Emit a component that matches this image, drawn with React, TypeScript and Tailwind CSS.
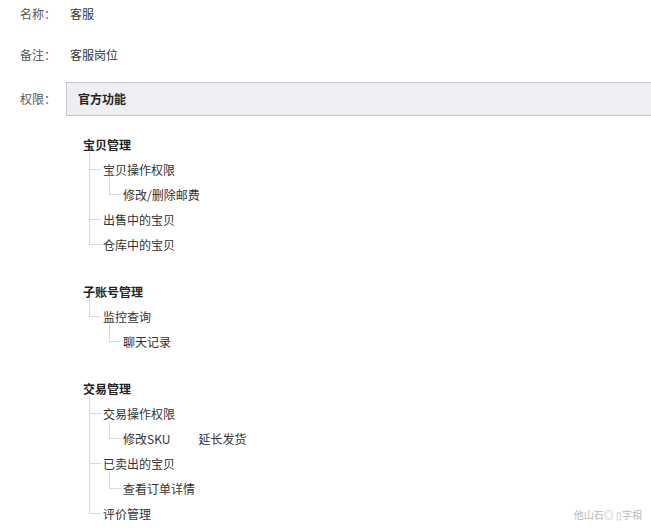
// Sub-account role detail — name / remark / permission tree.
import type { ReactNode } from 'react';

interface PermNode {
  label: string;
  extra?: string[]; // siblings shown on the same row
  children?: PermNode[];
}

const groups: PermNode[] = [
  {
    label: '宝贝管理',
    children: [
      { label: '宝贝操作权限', children: [{ label: '修改/删除邮费' }] },
      { label: '出售中的宝贝' },
      { label: '仓库中的宝贝' },
    ],
  },
  {
    label: '子账号管理',
    children: [{ label: '监控查询', children: [{ label: '聊天记录' }] }],
  },
  {
    label: '交易管理',
    children: [
      { label: '交易操作权限', children: [{ label: '修改SKU', extra: ['延长发货'] }] },
      { label: '已卖出的宝贝', children: [{ label: '查看订单详情' }] },
      { label: '评价管理' },
    ],
  },
];

// One branch: └ connector on the left, label + subtree on the right.
// The vertical stroke keeps running down for every child but the last.
function Branch({ node, last }: { node: PermNode; last: boolean }) {
  return (
    <div className="flex">
      <div className="flex w-[12px] shrink-0 flex-col">
        <div className="-mt-[5px] h-[18px] border-b border-l border-[#d9d9de]" />
        <div className={`flex-1 ${last ? '' : 'border-l border-[#d9d9de]'}`} />
      </div>
      <div className="min-w-0 pl-[2px]">
        <div className="flex h-[25px] items-center gap-[28px] text-[#333]">
          <span>{node.label}</span>
          {node.extra?.map((e) => <span key={e}>{e}</span>)}
        </div>
        {node.children && <Children nodes={node.children} />}
      </div>
    </div>
  );
}

function Children({ nodes }: { nodes: PermNode[] }) {
  return (
    <div className="ml-[6px]">
      {nodes.map((n, i) => (
        <Branch key={n.label} node={n} last={i === nodes.length - 1} />
      ))}
    </div>
  );
}

function Row({ label, children, className = '' }: { label: string; children: ReactNode; className?: string }) {
  return (
    <div className={`flex items-center ${className}`}>
      <div className="w-[46px] shrink-0 text-[#555]">{label}</div>
      {children}
    </div>
  );
}

export default function App() {
  return (
    <div
      className="relative h-[528px] w-[651px] overflow-hidden bg-white pl-[20px] pt-[4px] text-[12px] leading-[20px]"
      style={{ fontFamily: '"Noto Sans CJK SC", "Noto Sans", sans-serif' }}
    >
      <Row label="名称：" className="h-[20px]">
        <span className="ml-[4px] text-[#333]">客服</span>
      </Row>
      <Row label="备注：" className="mt-[21px] h-[20px]">
        <span className="ml-[4px] text-[#333]">客服岗位</span>
      </Row>
      <Row label="权限：" className="mt-[17px]">
        <div className="flex h-[34px] w-[620px] shrink-0 items-center border border-[#c8c8cc] bg-[#eeeff4] pl-[11px] font-bold text-[#222]">
          官方功能
        </div>
      </Row>

      <div className="ml-[63px] mt-[16px] flex flex-col gap-[22px]">
        {groups.map((g) => (
          <div key={g.label}>
            <div className="flex h-[25px] items-center font-bold text-[#222]">{g.label}</div>
            {g.children && <Children nodes={g.children} />}
          </div>
        ))}
      </div>

      {/* faint watermark, bottom right */}
      <div className="absolute bottom-[6px] right-[9px] text-[10px] leading-[14px] text-[#b8b8b8]">
        他山石◎ ▯字相
      </div>
    </div>
  );
}
